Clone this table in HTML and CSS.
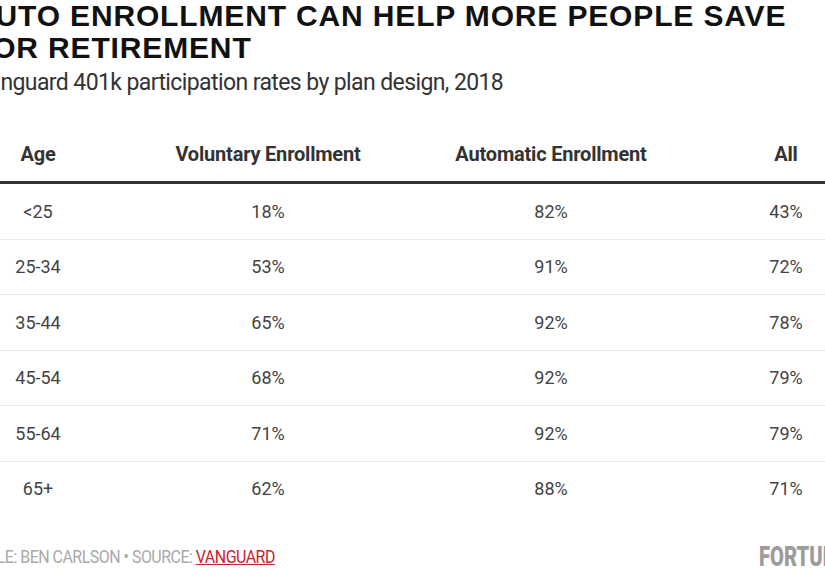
FILE: index.html
```html
<!DOCTYPE html>
<html lang="en">
<head>
<meta charset="utf-8">
<title>Auto enrollment</title>
<link rel="stylesheet" href="styles.css">
</head>
<body>
<div class="page">
  <h1 class="title">AUTO ENROLLMENT CAN HELP MORE PEOPLE SAVE<br>FOR RETIREMENT</h1>
  <p class="subtitle">Vanguard 401k participation rates by plan design, 2018</p>
  <div class="table">
    <div class="row head">
      <div class="cell">Age</div>
      <div class="cell">Voluntary Enrollment</div>
      <div class="cell">Automatic Enrollment</div>
      <div class="cell">All</div>
    </div>
    <div class="row"><div class="cell">&lt;25</div><div class="cell">18%</div><div class="cell">82%</div><div class="cell">43%</div></div>
    <div class="row"><div class="cell">25-34</div><div class="cell">53%</div><div class="cell">91%</div><div class="cell">72%</div></div>
    <div class="row"><div class="cell">35-44</div><div class="cell">65%</div><div class="cell">92%</div><div class="cell">78%</div></div>
    <div class="row"><div class="cell">45-54</div><div class="cell">68%</div><div class="cell">92%</div><div class="cell">79%</div></div>
    <div class="row"><div class="cell">55-64</div><div class="cell">71%</div><div class="cell">92%</div><div class="cell">79%</div></div>
    <div class="row last"><div class="cell">65+</div><div class="cell">62%</div><div class="cell">88%</div><div class="cell">71%</div></div>
  </div>
  <div class="footer">
    <span class="credit">TABLE: BEN CARLSON • SOURCE: <a class="src" href="#">VANGUARD</a></span>
    <span class="logo-box"><span class="logo">FORTUNE</span></span>
  </div>
</div>
</body>
</html>
```
FILE: styles.css
```css
html, body {
  margin: 0;
  padding: 0;
  background: #fff;
  overflow: hidden;
}
.page {
  width: 900px;
  margin-left: -25px;
}
.title {
  margin: 0 0 0 -2px;
  font-family: "Liberation Sans", Arial, sans-serif;
  font-weight: bold;
  font-size: 30px;
  line-height: 32px;
  letter-spacing: 0.85px;
  color: #111;
  white-space: nowrap;
}
.subtitle {
  margin: 4px 0 0 0;
  font-family: "Roboto", sans-serif;
  font-size: 23px;
  line-height: 30px;
  letter-spacing: -0.6px;
  color: #333;
}
.table {
  margin-top: 29px;
  width: 930px;
  font-family: "Roboto", sans-serif;
}
.row {
  display: grid;
  grid-template-columns: 126px 334px 232px 238px;
  height: 54.5px;
  align-items: center;
  border-bottom: 1px solid #eaeaea;
  font-size: 18px;
  color: #444;
}
.row.head {
  height: 54px;
  border-bottom: 3px solid #333;
  font-weight: bold;
  font-size: 20px;
  letter-spacing: -0.2px;
  color: #333;
}
.row.last {
  border-bottom: none;
}
.cell {
  text-align: center;
}
.footer {
  margin-top: 24px;
  display: flex;
  align-items: center;
  font-family: "Roboto", sans-serif;
}
.credit {
  display: inline-block;
  margin-left: -6px;
  font-size: 19px;
  letter-spacing: -0.6px;
  color: #aaa;
  white-space: nowrap;
  transform: scaleX(0.84);
  transform-origin: left center;
}
.src {
  color: #d0202e;
  text-decoration: underline;
}
.logo-box {
  margin-left: auto;
  width: 116px;
}
.logo {
  display: inline-block;
  font-weight: 900;
  font-size: 28px;
  color: #9c9c9c;
  transform: scaleX(0.72);
  transform-origin: left center;
}
```
